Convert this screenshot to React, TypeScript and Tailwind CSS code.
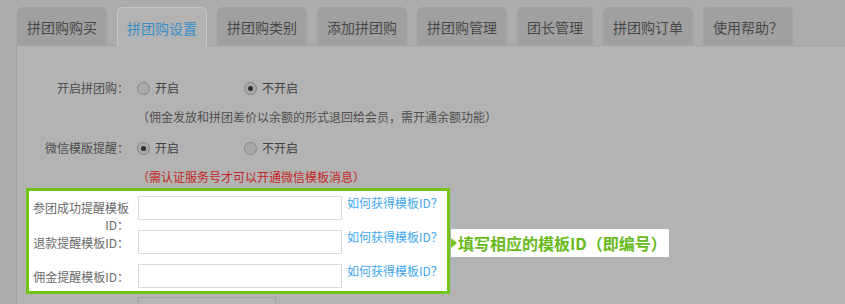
import React from 'react';

const tabs = ['拼团购购买', '拼团购设置', '拼团购类别', '添加拼团购', '拼团购管理', '团长管理', '拼团购订单', '使用帮助？'];

function Radio({ checked }: { checked?: boolean }) {
  return (
    <span className="flex h-[13px] w-[13px] items-center justify-center rounded-full border border-[#858585] bg-[#a9a9a9]">
      {checked && <span className="h-[5px] w-[5px] rounded-full bg-[#2e2e2e]" />}
    </span>
  );
}

function RadioRow({ label, on }: { label: string; on: boolean }) {
  return (
    <div className="flex h-[18px] items-center">
      <div className="w-[112px] text-right text-[#4d4d4d]">{label}</div>
      <div className="ml-[8px] flex items-center">
        <div className="flex w-[107px] items-center gap-[5px]">
          <Radio checked={on} />
          <span className="text-[#3f3f3f]">开启</span>
        </div>
        <div className="flex items-center gap-[5px]">
          <Radio checked={!on} />
          <span className="text-[#3f3f3f]">不开启</span>
        </div>
      </div>
    </div>
  );
}

function TemplateRow({ label, twoLine }: { label: string; twoLine?: boolean }) {
  return (
    <div className={`flex h-[24px] ${twoLine ? 'items-start' : 'items-center'}`}>
      <div className={`w-[100px] shrink-0 text-right leading-[17px] text-[#6a6a6a] ${twoLine ? 'mt-[3px]' : ''}`}>
        {label}
      </div>
      <div className="ml-[9px] h-[24px] w-[204px] shrink-0 self-start border border-[#dcdcdc] bg-white" />
      <a className="ml-[5px] -mt-[2px] self-start whitespace-nowrap leading-[18px] text-[#3fa8ef]">如何获得模板ID？</a>
    </div>
  );
}

export default function App() {
  return (
    <div
      className="h-[304px] w-[845px] overflow-hidden bg-[#acacac] text-[12px] [text-spacing-trim:space-all]"
      style={{ fontFamily: '"Noto Sans CJK SC", "Noto Sans", sans-serif' }}
    >
      {/* tabs */}
      <div className="flex gap-[10px] pl-[17px] pt-[7px]">
        {tabs.map((t, i) =>
          i === 1 ? (
            <div
              key={t}
              className="relative z-10 -mb-px flex h-[39px] items-center rounded-t-[6px] border border-b-0 border-[#c6c6c6] bg-[#b3b3b3] px-[9px] pt-[2px] text-[14px] text-[#3a8ec6]"
            >
              {t}
            </div>
          ) : (
            <div
              key={t}
              className="flex h-[38px] items-center rounded-t-[6px] bg-[#a0a0a0] px-[10px] pt-[2px] text-[14px] text-[#484848]"
            >
              {t}
            </div>
          ),
        )}
      </div>

      {/* panel */}
      <div className="ml-[16px] h-[260px] border-l border-t border-[#a0a0a0] bg-[#b3b3b3] pt-[33px] leading-[18px]">
        <RadioRow label="开启拼团购：" on={false} />
        <div className="ml-[120px] mt-[11px] text-[#4f4f4f]">（佣金发放和拼团差价以余额的形式退回给会员，需开通余额功能）</div>
        <div className="mt-[13px]">
          <RadioRow label="微信模版提醒：" on={true} />
        </div>
        <div className="ml-[120px] mt-[11px] text-[#c42626]">（需认证服务号才可以开通微信模板消息）</div>

        {/* highlighted block */}
        <div className="relative ml-[9px] mt-[2px] w-[424px] border-[3px] border-[#72c31a] bg-white pb-[3px] pt-[5px]">
          <div className="flex flex-col gap-[10px]">
            <TemplateRow label="参团成功提醒模板ID：" twoLine />
            <TemplateRow label="退款提醒模板ID：" />
            <TemplateRow label="佣金提醒模板ID：" />
          </div>

          <div className="absolute left-[422px] top-[38px] flex h-[28px] items-center bg-white pl-[7px] pr-[2px]">
            <span className="absolute left-0 top-[9px] h-0 w-0 border-y-[5px] border-l-[6px] border-y-transparent border-l-[#72c31a]" />
            <span className="whitespace-nowrap text-[16px] font-bold leading-[20px] text-[#68b91a]">填写相应的模板ID（即编号）</span>
          </div>
        </div>

        <div className="ml-[121px] mt-[3px] h-[24px] w-[138px] border border-[#a3a3a3] bg-[#b6b6b6]" />
      </div>
    </div>
  );
}
